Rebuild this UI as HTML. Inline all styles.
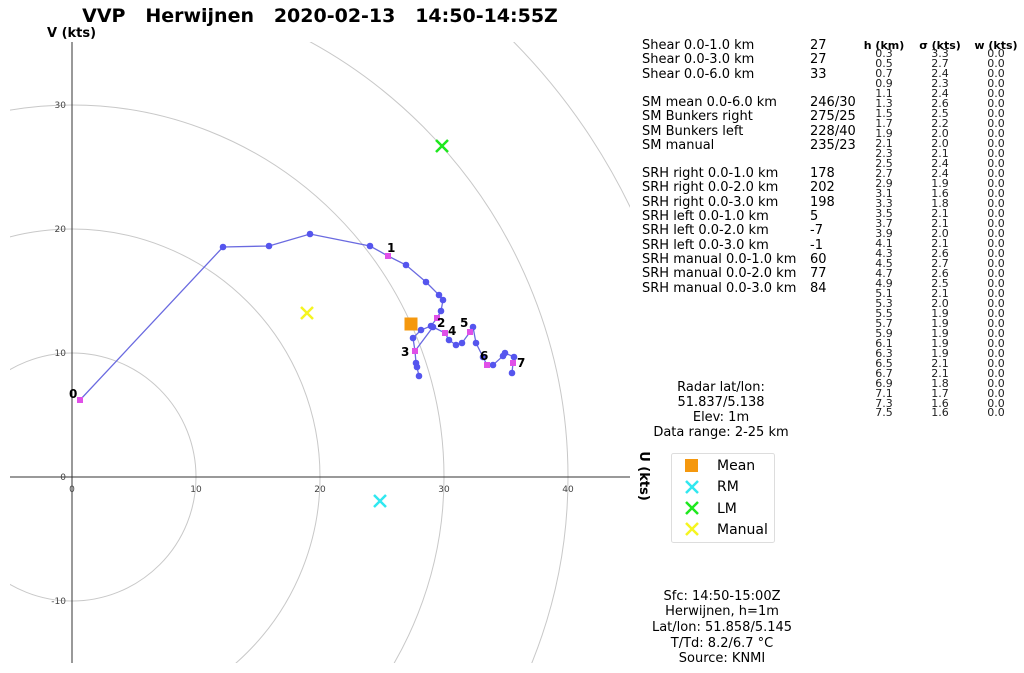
<!DOCTYPE html>
<html><head><meta charset="utf-8"><style>
html,body{margin:0;padding:0;background:#fff;overflow:hidden;width:1024px;height:673px;}
svg{display:block;font-family:"DejaVu Sans","Liberation Sans",sans-serif;}
</style></head><body>
<svg width="1024" height="673" viewBox="0 0 1024 673" xmlns="http://www.w3.org/2000/svg">
<defs><clipPath id="ax"><rect x="10" y="42" width="620" height="621"/></clipPath></defs>
<rect width="1024" height="673" fill="#fff"/>
<text x="320" y="22" font-size="19" font-weight="bold" text-anchor="middle" fill="#000" xml:space="preserve">VVP   Herwijnen   2020-02-13   14:50-14:55Z</text>
<text x="47" y="37" font-size="13" font-weight="bold">V (kts)</text>
<g clip-path="url(#ax)" fill="none" stroke="#c8c8c8" stroke-width="1">
<circle cx="72" cy="477" r="124"/><circle cx="72" cy="477" r="248"/><circle cx="72" cy="477" r="372"/><circle cx="72" cy="477" r="496"/><circle cx="72" cy="477" r="620"/>
</g>
<g stroke="#333" stroke-width="1">
<line x1="72" y1="42" x2="72" y2="663"/><line x1="10" y1="477" x2="630" y2="477"/>
</g>
<g font-size="9" fill="#444" text-anchor="middle">
<text x="72" y="492">0</text><text x="196" y="492">10</text><text x="320" y="492">20</text><text x="444" y="492">30</text><text x="568" y="492">40</text>
</g>
<g font-size="9" fill="#444" text-anchor="end">
<text x="66" y="108">30</text><text x="66" y="232">20</text><text x="66" y="356">10</text><text x="66" y="480">0</text><text x="66" y="604">-10</text>
</g>
<g stroke="#6a6ae0" stroke-width="1.3" fill="none">
<polyline points="80,400 223,247 269,246 310,234 370,246 388,256 406,265 426,282 439,295 443,300 441,311 437,318 431,326 421,330 413,338 415,351 416,363 419,376"/>
<polyline points="415,351 433,327 445,333 449,340 456,345 462,343 470,332 473,327 476,343 483,357 487,365 493,365 503,356 505,353 514,357 513,363 512,373"/>
</g>
<g fill="#5555ee">
<circle cx="223" cy="247" r="3.3"/><circle cx="269" cy="246" r="3.3"/><circle cx="310" cy="234" r="3.3"/><circle cx="370" cy="246" r="3.3"/><circle cx="406" cy="265" r="3.3"/><circle cx="426" cy="282" r="3.3"/><circle cx="439" cy="295" r="3.3"/><circle cx="443" cy="300" r="3.3"/><circle cx="441" cy="311" r="3.3"/><circle cx="431" cy="326" r="3.3"/><circle cx="421" cy="330" r="3.3"/><circle cx="413" cy="338" r="3.3"/><circle cx="416" cy="363" r="3.3"/><circle cx="417" cy="367" r="3.3"/><circle cx="419" cy="376" r="3.3"/><circle cx="433" cy="327" r="3.3"/><circle cx="449" cy="340" r="3.3"/><circle cx="456" cy="345" r="3.3"/><circle cx="462" cy="343" r="3.3"/><circle cx="473" cy="327" r="3.3"/><circle cx="476" cy="343" r="3.3"/><circle cx="483" cy="357" r="3.3"/><circle cx="493" cy="365" r="3.3"/><circle cx="503" cy="356" r="3.3"/><circle cx="505" cy="353" r="3.3"/><circle cx="514" cy="357" r="3.3"/><circle cx="512" cy="373" r="3.3"/>
</g>
<g fill="#e050e8">
<rect x="77" y="397" width="6" height="6"/><rect x="385" y="253" width="6" height="6"/><rect x="434" y="315" width="6" height="6"/><rect x="412" y="348" width="6" height="6"/><rect x="442" y="330" width="6" height="6"/><rect x="467" y="329" width="6" height="6"/><rect x="484" y="362" width="6" height="6"/><rect x="510" y="360" width="6" height="6"/>
</g>
<g font-size="12" font-weight="bold" fill="#000">
<text x="69" y="398">0</text><text x="387" y="252">1</text><text x="437" y="327">2</text><text x="401" y="356">3</text><text x="448" y="335">4</text><text x="460" y="327">5</text><text x="480" y="360">6</text><text x="517" y="367">7</text>
</g>
<rect x="404.5" y="317.5" width="13" height="13" fill="#f5980e"/>
<g stroke-width="2.5" fill="none">
<path d="M374,495 L386,507 M386,495 L374,507" stroke="#30e8f0"/>
<path d="M436,140 L448,152 M448,140 L436,152" stroke="#1ee81e"/>
<path d="M301,307 L313,319 M313,307 L301,319" stroke="#f5f520"/>
</g>
<text transform="translate(640,476) rotate(90)" font-size="13" font-weight="bold" text-anchor="middle">U (kts)</text>
<g font-size="13" fill="#000">
<text x="642" y="49">Shear 0.0-1.0 km</text><text x="810" y="49">27</text>
<text x="642" y="63">Shear 0.0-3.0 km</text><text x="810" y="63">27</text>
<text x="642" y="78">Shear 0.0-6.0 km</text><text x="810" y="78">33</text>
<text x="642" y="106">SM mean 0.0-6.0 km</text><text x="810" y="106">246/30</text>
<text x="642" y="120">SM Bunkers right</text><text x="810" y="120">275/25</text>
<text x="642" y="135">SM Bunkers left</text><text x="810" y="135">228/40</text>
<text x="642" y="149">SM manual</text><text x="810" y="149">235/23</text>
<text x="642" y="177">SRH right 0.0-1.0 km</text><text x="810" y="177">178</text>
<text x="642" y="191">SRH right 0.0-2.0 km</text><text x="810" y="191">202</text>
<text x="642" y="206">SRH right 0.0-3.0 km</text><text x="810" y="206">198</text>
<text x="642" y="220">SRH left 0.0-1.0 km</text><text x="810" y="220">5</text>
<text x="642" y="234">SRH left 0.0-2.0 km</text><text x="810" y="234">-7</text>
<text x="642" y="249">SRH left 0.0-3.0 km</text><text x="810" y="249">-1</text>
<text x="642" y="263">SRH manual 0.0-1.0 km</text><text x="810" y="263">60</text>
<text x="642" y="277">SRH manual 0.0-2.0 km</text><text x="810" y="277">77</text>
<text x="642" y="292">SRH manual 0.0-3.0 km</text><text x="810" y="292">84</text>
</g>
<g font-size="11" font-weight="bold" text-anchor="middle">
<text x="884" y="49">h (km)</text><text x="940" y="49">σ (kts)</text><text x="996" y="49">w (kts)</text>
</g>
<g font-size="11" fill="#222" text-anchor="middle">
<text x="884" y="57">0.3</text><text x="940" y="57">3.3</text><text x="996" y="57">0.0</text>
<text x="884" y="67">0.5</text><text x="940" y="67">2.7</text><text x="996" y="67">0.0</text>
<text x="884" y="77">0.7</text><text x="940" y="77">2.4</text><text x="996" y="77">0.0</text>
<text x="884" y="87">0.9</text><text x="940" y="87">2.3</text><text x="996" y="87">0.0</text>
<text x="884" y="97">1.1</text><text x="940" y="97">2.4</text><text x="996" y="97">0.0</text>
<text x="884" y="107">1.3</text><text x="940" y="107">2.6</text><text x="996" y="107">0.0</text>
<text x="884" y="117">1.5</text><text x="940" y="117">2.5</text><text x="996" y="117">0.0</text>
<text x="884" y="127">1.7</text><text x="940" y="127">2.2</text><text x="996" y="127">0.0</text>
<text x="884" y="137">1.9</text><text x="940" y="137">2.0</text><text x="996" y="137">0.0</text>
<text x="884" y="147">2.1</text><text x="940" y="147">2.0</text><text x="996" y="147">0.0</text>
<text x="884" y="157">2.3</text><text x="940" y="157">2.1</text><text x="996" y="157">0.0</text>
<text x="884" y="167">2.5</text><text x="940" y="167">2.4</text><text x="996" y="167">0.0</text>
<text x="884" y="177">2.7</text><text x="940" y="177">2.4</text><text x="996" y="177">0.0</text>
<text x="884" y="187">2.9</text><text x="940" y="187">1.9</text><text x="996" y="187">0.0</text>
<text x="884" y="197">3.1</text><text x="940" y="197">1.6</text><text x="996" y="197">0.0</text>
<text x="884" y="207">3.3</text><text x="940" y="207">1.8</text><text x="996" y="207">0.0</text>
<text x="884" y="217">3.5</text><text x="940" y="217">2.1</text><text x="996" y="217">0.0</text>
<text x="884" y="227">3.7</text><text x="940" y="227">2.1</text><text x="996" y="227">0.0</text>
<text x="884" y="237">3.9</text><text x="940" y="237">2.0</text><text x="996" y="237">0.0</text>
<text x="884" y="247">4.1</text><text x="940" y="247">2.1</text><text x="996" y="247">0.0</text>
<text x="884" y="257">4.3</text><text x="940" y="257">2.6</text><text x="996" y="257">0.0</text>
<text x="884" y="267">4.5</text><text x="940" y="267">2.7</text><text x="996" y="267">0.0</text>
<text x="884" y="277">4.7</text><text x="940" y="277">2.6</text><text x="996" y="277">0.0</text>
<text x="884" y="287">4.9</text><text x="940" y="287">2.5</text><text x="996" y="287">0.0</text>
<text x="884" y="297">5.1</text><text x="940" y="297">2.1</text><text x="996" y="297">0.0</text>
<text x="884" y="307">5.3</text><text x="940" y="307">2.0</text><text x="996" y="307">0.0</text>
<text x="884" y="317">5.5</text><text x="940" y="317">1.9</text><text x="996" y="317">0.0</text>
<text x="884" y="327">5.7</text><text x="940" y="327">1.9</text><text x="996" y="327">0.0</text>
<text x="884" y="337">5.9</text><text x="940" y="337">1.9</text><text x="996" y="337">0.0</text>
<text x="884" y="347">6.1</text><text x="940" y="347">1.9</text><text x="996" y="347">0.0</text>
<text x="884" y="357">6.3</text><text x="940" y="357">1.9</text><text x="996" y="357">0.0</text>
<text x="884" y="367">6.5</text><text x="940" y="367">2.1</text><text x="996" y="367">0.0</text>
<text x="884" y="377">6.7</text><text x="940" y="377">2.1</text><text x="996" y="377">0.0</text>
<text x="884" y="387">6.9</text><text x="940" y="387">1.8</text><text x="996" y="387">0.0</text>
<text x="884" y="397">7.1</text><text x="940" y="397">1.7</text><text x="996" y="397">0.0</text>
<text x="884" y="407">7.3</text><text x="940" y="407">1.6</text><text x="996" y="407">0.0</text>
<text x="884" y="416">7.5</text><text x="940" y="416">1.6</text><text x="996" y="416">0.0</text>
</g>
<g font-size="13" text-anchor="middle" fill="#000">
<text x="721" y="391">Radar lat/lon:</text>
<text x="721" y="406">51.837/5.138</text>
<text x="721" y="421">Elev: 1m</text>
<text x="721" y="436">Data range: 2-25 km</text>
<text x="722" y="600">Sfc: 14:50-15:00Z</text>
<text x="722" y="615">Herwijnen, h=1m</text>
<text x="722" y="631">Lat/lon: 51.858/5.145</text>
<text x="722" y="647">T/Td: 8.2/6.7 °C</text>
<text x="722" y="662">Source: KNMI</text>
</g>
<rect x="671.5" y="453.5" width="103" height="89" rx="2" fill="#fff" stroke="#ddd"/>
<rect x="685" y="459" width="13" height="13" fill="#f5980e"/>
<g stroke-width="2.5">
<path d="M686,481 L698,493 M698,481 L686,493" stroke="#30e8f0"/>
<path d="M686,502 L698,514 M698,502 L686,514" stroke="#1ee81e"/>
<path d="M686,523 L698,535 M698,523 L686,535" stroke="#f5f520"/>
</g>
<g font-size="14" fill="#000">
<text x="717" y="470">Mean</text><text x="717" y="491">RM</text><text x="717" y="513">LM</text><text x="717" y="534">Manual</text>
</g>
</svg>
</body></html>
